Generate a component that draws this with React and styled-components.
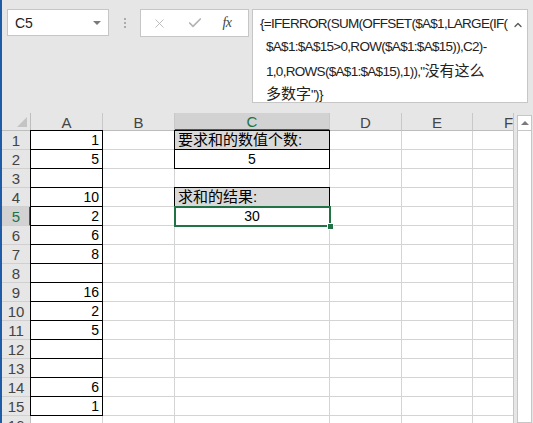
import styled, { createGlobalStyle } from "styled-components";
import { X, Check, ChevronUp } from "lucide-react";

const GlobalStyle = createGlobalStyle`
  html, body {
    margin: 0;
    padding: 0;
    width: 533px;
    height: 423px;
    overflow: hidden;
    background: #e6e6e6;
    font-family: "Liberation Sans", "Noto Sans CJK SC", sans-serif;
  }
`;

const GREEN = "#217346";
const GRID = "#d4d4d4";

const Window = styled.div`
  display: flex;
  width: 533px;
  height: 423px;
  overflow: hidden;
  background: #e6e6e6;
`;

const Strip = styled.div`
  width: 2px;
  flex: none;
  background: #1f5ca8;
`;

const Main = styled.div`
  flex: 1;
  display: flex;
  flex-direction: column;
  min-width: 0;
`;

const Toolbar = styled.div`
  display: flex;
  align-items: flex-start;
  padding: 9px 5px 10px 5px;
  height: 94px;
`;

const NameBox = styled.div`
  flex: none;
  width: 102px;
  height: 27px;
  box-sizing: border-box;
  background: #fff;
  border: 1px solid #c6c6c6;
  display: flex;
  align-items: center;
  justify-content: space-between;
  padding: 0 7px 0 7px;
  font-size: 14px;
  color: #222;
`;

const DropArrow = styled.span`
  width: 0;
  height: 0;
  border-left: 4px solid transparent;
  border-right: 4px solid transparent;
  border-top: 4px solid #7a7a7a;
`;

const Grip = styled.div`
  flex: none;
  width: 31px;
  height: 28px;
  display: flex;
  flex-direction: column;
  align-items: center;
  justify-content: center;
  gap: 2px;
  & span {
    width: 2px;
    height: 2px;
    background: #ababab;
  }
`;

const ButtonBox = styled.div`
  flex: none;
  width: 109px;
  height: 28px;
  box-sizing: border-box;
  background: #fff;
  border: 1px solid #c6c6c6;
  display: grid;
  grid-template-columns: 36px 35px 36px;
  align-items: center;
  justify-items: center;
  color: #b4b4b4;
`;

const Fx = styled.span`
  font-family: "Liberation Serif", serif;
  font-style: italic;
  font-size: 14px;
  color: #444;
  letter-spacing: -0.5px;
  margin-left: -6px;
`;

const FormulaBox = styled.div`
  margin-left: 3px;
  flex: 1;
  min-width: 0;
  height: 94px;
  box-sizing: border-box;
  background: #fff;
  border: 1px solid #c6c6c6;
  display: flex;
  padding: 2px 3px 0 7px;
`;

const FormulaText = styled.div`
  flex: 1;
  min-width: 0;
  font-family: "Liberation Sans", "Noto Sans CJK SC", sans-serif;
  font-size: 13.5px;
  letter-spacing: -0.7px;
  color: #222;
`;

const FormulaLine = styled.div`
  height: 23px;
  line-height: 23px;
  white-space: nowrap;
  padding-left: ${(p) => (p.$indent ? "6px" : "0")};
`;

const Han = styled.span`
  font-family: "Noto Sans CJK SC", sans-serif;
  font-size: 15px;
  letter-spacing: 0;
`;

const Expand = styled.div`
  flex: none;
  width: 12px;
  padding-top: 5px;
  color: #555;
`;

const SheetArea = styled.div`
  flex: 1;
  display: flex;
  min-height: 0;
`;

const Grid = styled.div`
  width: 511px;
  flex: none;
  overflow: hidden;
  display: grid;
  grid-template-columns: 29px 72px 72px 155px 72px 71px 72px;
  grid-auto-rows: 19px;
  grid-template-rows: 18px;
  background: #fff;
  align-content: start;
  position: relative;
`;

const Corner = styled.div`
  background: #e6e6e6;
  box-sizing: border-box;
  border-right: 1px solid #bdbdbd;
  border-bottom: 1px solid #bdbdbd;
  display: flex;
  align-items: flex-end;
  justify-content: flex-end;
  padding: 0 3px 3px 0;
  & span {
    width: 0;
    height: 0;
    border-left: 10px solid transparent;
    border-bottom: 10px solid #c4c4c4;
  }
`;

const ColHead = styled.div`
  box-sizing: border-box;
  background: ${(p) => (p.$active ? "#d2d2d2" : "#e6e6e6")};
  color: ${(p) => (p.$active ? GREEN : "#444")};
  border-right: 1px solid #c8c8c8;
  border-bottom: ${(p) => (p.$active ? `2px solid ${GREEN}` : "1px solid #bdbdbd")};
  font-size: 15px;
  display: flex;
  align-items: center;
  justify-content: center;
  padding-top: 1px;
`;

const RowHead = styled.div`
  box-sizing: border-box;
  background: ${(p) => (p.$active ? "#d2d2d2" : "#e6e6e6")};
  color: ${(p) => (p.$active ? GREEN : "#444")};
  border-right: ${(p) => (p.$active ? `2px solid ${GREEN}` : "1px solid #bdbdbd")};
  border-bottom: 1px solid #d0d0d0;
  font-size: 15px;
  display: flex;
  align-items: center;
  justify-content: center;
  padding-left: ${(p) => (p.$active ? "1px" : "0")};
`;

const Cell = styled.div`
  position: relative;
  box-sizing: border-box;
  border-right: 1px solid ${GRID};
  border-bottom: 1px solid ${GRID};
  background: ${(p) => (p.$fill ? "#d9d9d9" : "#fff")};
  font-size: ${(p) => (p.$text ? "15px" : "14px")};
  color: #000;
  line-height: 18px;
  white-space: nowrap;
  display: flex;
  justify-content: ${(p) =>
    p.$align === "center" ? "center" : p.$align === "left" ? "flex-start" : "flex-end"};
  padding: 0 3px;
  &::after {
    content: "";
    display: ${(p) => (p.$boxed ? "block" : "none")};
    position: absolute;
    left: -1px;
    top: -1px;
    right: -1px;
    bottom: -1px;
    border: 1px solid #000;
    pointer-events: none;
    z-index: 1;
  }
`;

const Selection = styled.span`
  position: absolute;
  left: -1px;
  top: -1px;
  right: -2px;
  bottom: -2px;
  border: 2px solid ${GREEN};
  pointer-events: none;
  z-index: 2;
`;

const FillHandle = styled.span`
  position: absolute;
  right: -5px;
  bottom: -5px;
  width: 5px;
  height: 5px;
  background: ${GREEN};
  border: 1px solid #fff;
  z-index: 3;
`;

const ScrollGap = styled.div`
  width: 4px;
  flex: none;
  border-left: 1px solid #c6c6c6;
  box-sizing: border-box;
`;

const ScrollBar = styled.div`
  width: 15px;
  flex: none;
  display: flex;
  flex-direction: column;
  padding-top: 2px;
`;

const ScrollButton = styled.div`
  height: 16px;
  box-sizing: border-box;
  background: #fff;
  border: 1px solid #c6c6c6;
  display: flex;
  align-items: center;
  justify-content: center;
  & span {
    width: 0;
    height: 0;
    border-left: 4px solid transparent;
    border-right: 4px solid transparent;
    border-bottom: 4px solid #7a7a7a;
  }
`;

const ScrollThumb = styled.div`
  flex: 1;
  background: #fff;
  border: 1px solid #c6c6c6;
  border-top: none;
`;

const cols = ["A", "B", "C", "D", "E", "F"];
const colA = [1, 5, "", 10, 2, 6, 8, "", 16, 2, 5, "", "", 6, 1, ""];

const special = {
  "C1": { value: "要求和的数值个数:", fill: true, boxed: true, align: "left", text: true },
  "C2": { value: 5, boxed: true, align: "center" },
  "C4": { value: "求和的结果:", fill: true, boxed: true, align: "left", text: true },
  "C5": { value: 30, align: "center", selected: true },
};

function cellFor(col, row) {
  const key = col + row;
  if (special[key]) return special[key];
  if (col === "A" && row <= 15) return { value: colA[row - 1], boxed: true };
  return { value: "" };
}

export default function App() {
  const rows = Array.from({ length: 16 }, (_, i) => i + 1);
  return (
    <>
      <GlobalStyle />
      <Window>
        <Strip />
        <Main>
          <Toolbar>
            <NameBox>
              C5
              <DropArrow />
            </NameBox>
            <Grip>
              <span />
              <span />
              <span />
            </Grip>
            <ButtonBox>
              <X size={15} strokeWidth={1.4} />
              <Check size={16} strokeWidth={2.6} />
              <Fx>fx</Fx>
            </ButtonBox>
            <FormulaBox>
              <FormulaText>
                <FormulaLine>{"{=IFERROR(SUM(OFFSET($A$1,LARGE(IF("}</FormulaLine>
                <FormulaLine $indent>{"$A$1:$A$15>0,ROW($A$1:$A$15)),C2)-"}</FormulaLine>
                <FormulaLine $indent>
                  {'1,0,ROWS($A$1:$A$15),1)),"'}
                  <Han>没有这么</Han>
                </FormulaLine>
                <FormulaLine $indent>
                  <Han>多数字</Han>
                  {'")}'}
                </FormulaLine>
              </FormulaText>
              <Expand>
                <ChevronUp size={12} strokeWidth={2.5} />
              </Expand>
            </FormulaBox>
          </Toolbar>
          <SheetArea>
            <Grid>
              <Corner>
                <span />
              </Corner>
              {cols.map((c) => (
                <ColHead key={c} $active={c === "C"}>
                  {c}
                </ColHead>
              ))}
              {rows.map((r) => (
                <RowFragment key={r} row={r} />
              ))}
            </Grid>
            <ScrollGap />
            <ScrollBar>
              <ScrollButton>
                <span />
              </ScrollButton>
              <ScrollThumb />
            </ScrollBar>
          </SheetArea>
        </Main>
      </Window>
    </>
  );
}

function RowFragment({ row }) {
  return (
    <>
      <RowHead $active={row === 5}>{row}</RowHead>
      {cols.map((c) => {
        const cell = cellFor(c, row);
        return (
          <Cell
            key={c}
            $fill={cell.fill}
            $boxed={cell.boxed}
            $align={cell.align}
            $text={cell.text}
          >
            {cell.value}
            {cell.selected && (
              <>
                <Selection />
                <FillHandle />
              </>
            )}
          </Cell>
        );
      })}
    </>
  );
}
